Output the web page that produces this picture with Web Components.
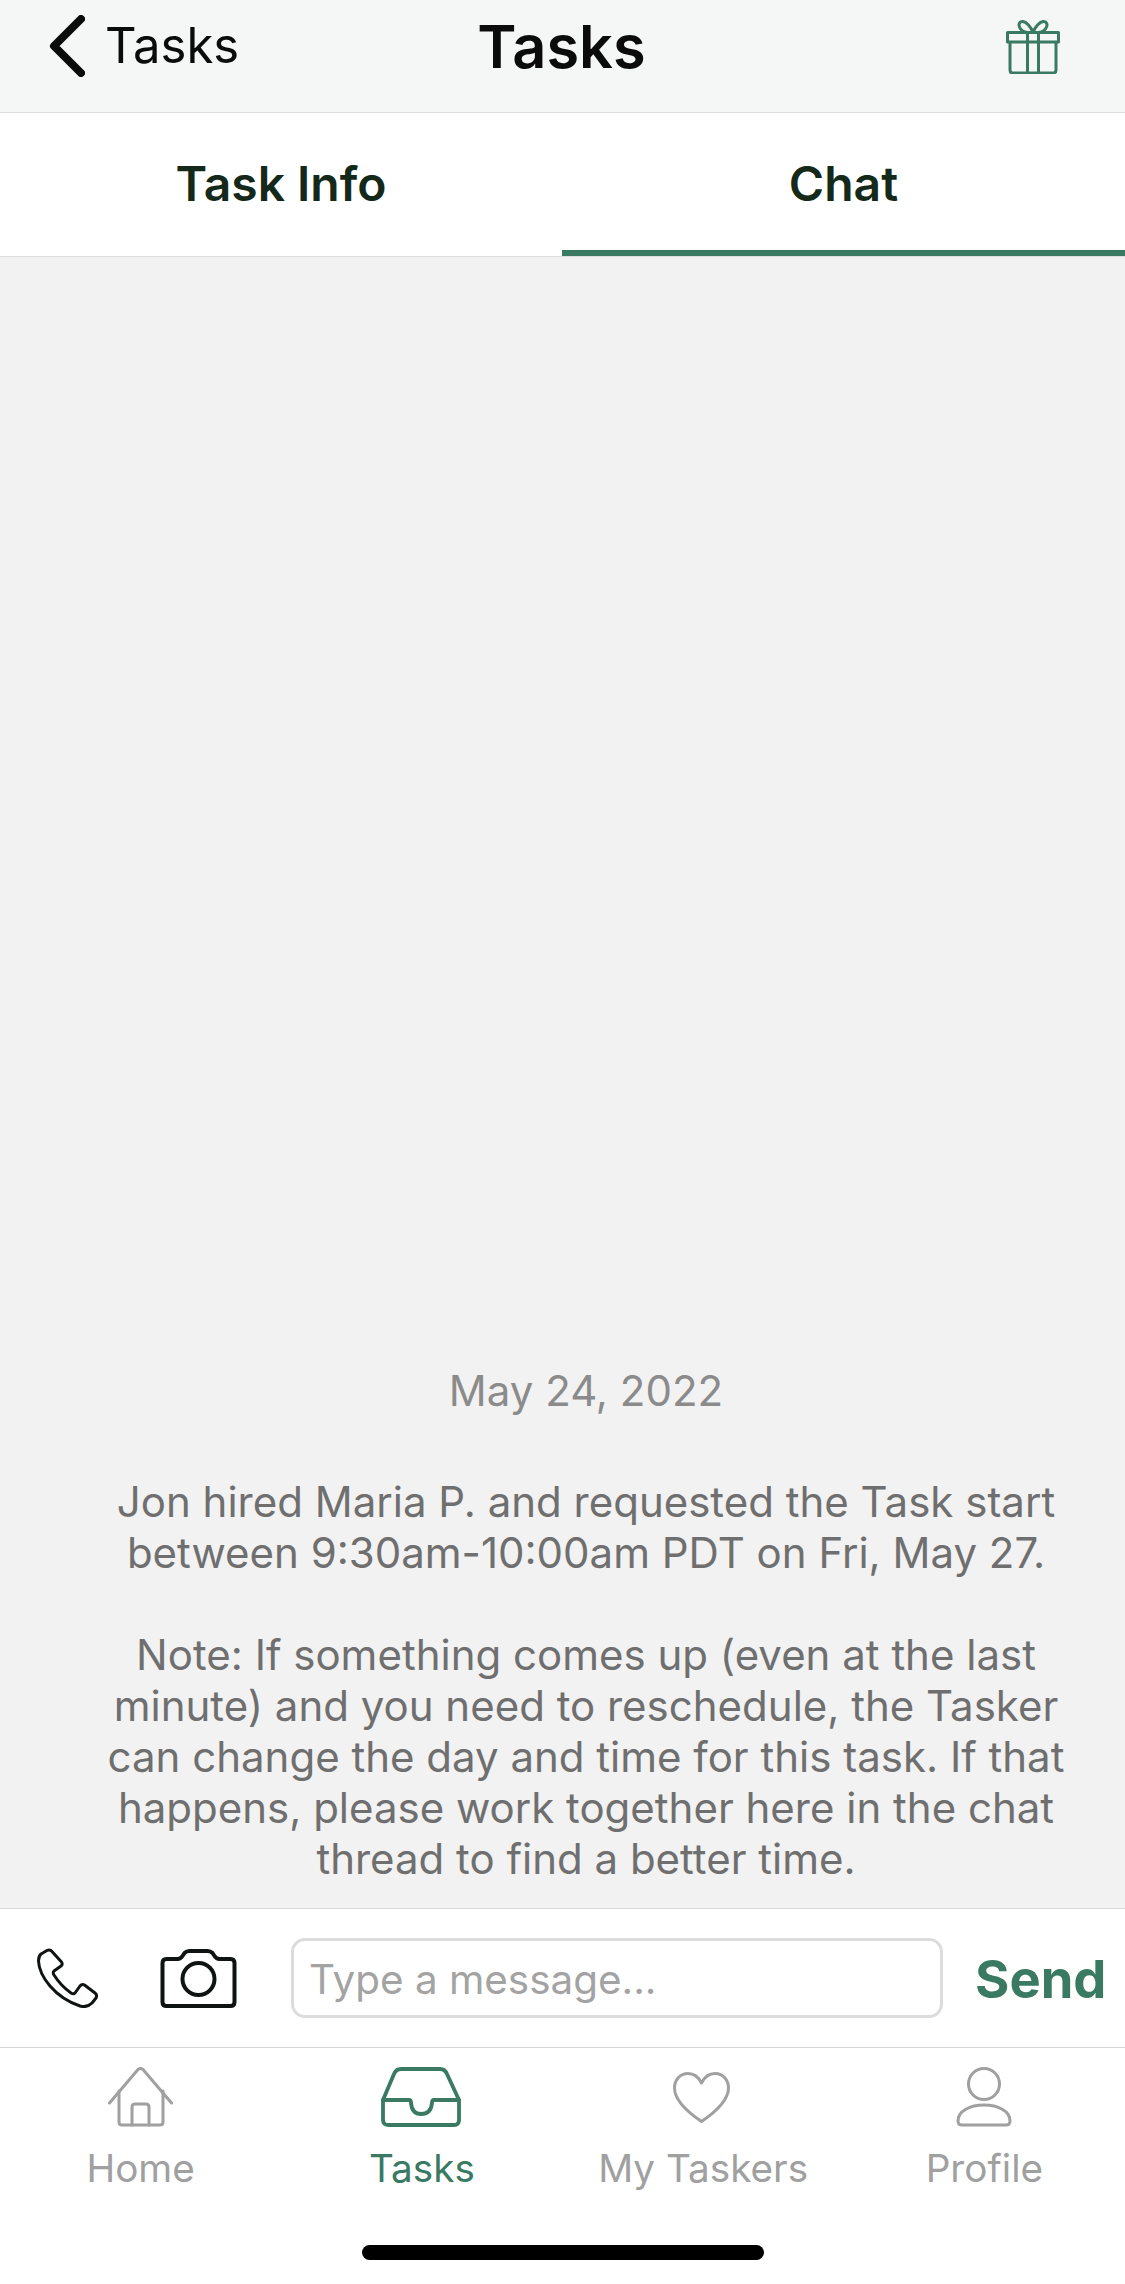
<!DOCTYPE html>
<html lang="en">
<head>
<meta charset="utf-8">
<title>Tasks</title>
<style>
    html, body { margin: 0; height: 100%; }
    body { font-family: Inter, "Liberation Sans", sans-serif; background: #fff; }
    task-screen { height: 2284px; }
</style>
</head>
<body>
<task-screen>
    <task-top-bar back="Tasks" heading="Tasks"></task-top-bar>
    <task-tabs></task-tabs>
    <chat-thread date="May 24, 2022">
        <p>Jon hired Maria P. and requested the Task start<br>between 9:30am-10:00am PDT on Fri, May 27.</p>
        <p>Note: If something comes up (even at the last<br>minute) and you need to reschedule, the Tasker<br>can change the day and time for this task. If that<br>happens, please work together here in the chat<br>thread to find a better time.</p>
    </chat-thread>
    <message-composer></message-composer>
    <bottom-nav>
        <nav-item label="Home" icon="home"></nav-item>
        <nav-item label="Tasks" icon="tasks" active></nav-item>
        <nav-item label="My Taskers" icon="heart"></nav-item>
        <nav-item label="Profile" icon="profile"></nav-item>
    </bottom-nav>
    <home-indicator></home-indicator>
</task-screen>
<script>
const GREEN = '#3a7a63';

const NAV_ICONS = {
    home: /*html*/ `<svg width="65" height="60" viewBox="0 0 65 60" fill="none" stroke="currentColor" stroke-width="3" stroke-linecap="round" stroke-linejoin="round">
        <path d="M1.5 36 L30 2.5 Q32.5 0.5 35 2.5 L63.5 36"/>
        <path d="M11 24 V55 Q11 58 14 58 H52 Q55 58 55 55 V24"/>
        <path d="M24 58 V40 Q24 37 27 37 H38 Q41 37 41 40 V58"/></svg>`,
    tasks: /*html*/ `<svg width="80" height="60" viewBox="0 0 80 60" fill="none" stroke="currentColor" stroke-width="3.8" stroke-linecap="round" stroke-linejoin="round" style="margin-right:2px">
        <path d="M2 33 L13 7 Q15 2 20 2 H59 Q64 2 66 7 L78 33 V53 Q78 58 73 58 H7 Q2 58 2 53 Z"/>
        <path d="M2 33 H28 Q30 33 30 36 Q31 47 40 47 Q50 47 51 36 Q51 33 53 33 H78"/></svg>`,
    heart: /*html*/ `<svg width="57" height="51" viewBox="0 0 57 51" fill="none" stroke="currentColor" stroke-width="3" stroke-linecap="round" stroke-linejoin="round" style="margin-right:4px">
        <path d="M28.5 11 C25 4 20 1.5 15 1.5 C7 1.5 1.5 8 1.5 16 C1.5 29 16 41 28.5 49.5 C41 41 55.5 29 55.5 16 C55.5 8 50 1.5 42 1.5 C37 1.5 32 4 28.5 11 Z"/></svg>`,
    profile: /*html*/ `<svg width="56" height="60" viewBox="0 0 56 60" fill="none" stroke="currentColor" stroke-width="3" stroke-linecap="round" stroke-linejoin="round">
        <circle cx="28" cy="17" r="15.5"/>
        <path d="M2 54 C2 44 14 38 28 38 C42 38 54 44 54 54 Q54 58 50 58 H6 Q2 58 2 54 Z"/></svg>`
};

class TaskScreen extends HTMLElement {
    constructor() {
        super();
        this.attachShadow({ mode: "open" })
            .innerHTML = /*html*/ `
            <style>
                :host {
                    display: flex;
                    flex-direction: column;
                    background: #fff;
                }
            </style>
            <slot></slot>
        `;
    }
}

class TaskTopBar extends HTMLElement {
    constructor() {
        super();
        this.attachShadow({ mode: "open" })
            .innerHTML = /*html*/ `
            <style>
                :host {
                    display: grid;
                    grid-template-columns: 1fr auto 1fr;
                    align-items: start;
                    height: 112px;
                    flex: none;
                    background: #f5f7f6;
                    border-bottom: 1px solid #dcdedd;
                    color: #0b0b0b;
                }
                .back {
                    display: flex;
                    align-items: center;
                    gap: 20px;
                    padding: 15px 0 0 49px;
                    font-size: 49px;
                    line-height: 62px;
                    font-weight: 400;
                }
                h1 {
                    margin: 0 2px 0 0;
                    padding-top: 10px;
                    font-size: 59.5px;
                    line-height: 72px;
                    font-weight: 600;
                }
                .gift {
                    justify-self: end;
                    padding: 20px 65px 0 0;
                    color: ${GREEN};
                }
                svg { display: block; }
            </style>
            <div class="back">
                <svg width="36" height="62" viewBox="0 0 36 62" fill="none" stroke="currentColor" stroke-width="8" stroke-linecap="round" stroke-linejoin="round"><path d="M32 4 L5 31 L32 58"/></svg>
                <span>${this.getAttribute('back')}</span>
            </div>
            <h1>${this.getAttribute('heading')}</h1>
            <div class="gift">
                <svg width="54" height="54" viewBox="0 0 54 54" fill="none" stroke="currentColor" stroke-width="3" stroke-linejoin="round">
                    <rect x="1.5" y="12.5" width="51" height="9.5"/>
                    <path d="M4 22 V50 Q4 53 7 53 H47 Q50 53 50 50 V22"/>
                    <path d="M21.5 12.5 V53 M32.5 12.5 V53"/>
                    <path d="M21.5 12.5 C12 11 11 2 16 1.5 C20 1 25 7 27 12.5 C29 7 34 1 38 1.5 C43 2 42 11 32.5 12.5"/>
                </svg>
            </div>
        `;
    }
}

class TaskTabs extends HTMLElement {
    constructor() {
        super();
        this.attachShadow({ mode: "open" })
            .innerHTML = /*html*/ `
            <style>
                :host {
                    display: grid;
                    grid-template-columns: 562px 563px;
                    height: 143px;
                    flex: none;
                    border-bottom: 1px solid #dcdedd;
                    background: #fff;
                    color: #14291a;
                    font-size: 48px;
                    font-weight: 600;
                    text-align: center;
                }
                div {
                    box-sizing: border-box;
                    line-height: 141px;
                    height: 143px;
                }
                .on { border-bottom: 6px solid ${GREEN}; }
            </style>
            <div>Task Info</div>
            <div class="on">Chat</div>
        `;
    }
}

class ChatThread extends HTMLElement {
    constructor() {
        super();
        this.attachShadow({ mode: "open" })
            .innerHTML = /*html*/ `
            <style>
                :host {
                    display: flex;
                    flex-direction: column;
                    justify-content: flex-end;
                    flex: 1;
                    padding: 0 48px 24px 95px;
                    background: #f2f2f2;
                    text-align: center;
                    font-size: 42px;
                    line-height: 51px;
                    color: #6f6f6f;
                }
                .date { color: #8b8b8b; margin-bottom: 60px; }
                ::slotted(p) { margin: 0 0 51px; white-space: nowrap; }
                ::slotted(p:last-child) { margin-bottom: 0; }
            </style>
            <div class="date">${this.getAttribute('date')}</div>
            <slot></slot>
        `;
    }
}

class MessageComposer extends HTMLElement {
    constructor() {
        super();
        this.attachShadow({ mode: "open" })
            .innerHTML = /*html*/ `
            <style>
                :host {
                    display: flex;
                    align-items: center;
                    box-sizing: border-box;
                    height: 140px;
                    flex: none;
                    padding-left: 37px;
                    background: #fff;
                    border-top: 1px solid #d6d6d6;
                    border-bottom: 1px solid #d6d6d6;
                    color: #0f1311;
                }
                svg { display: block; flex: none; }
                .camera { margin-left: 62px; }
                .field {
                    box-sizing: border-box;
                    width: 652px;
                    height: 80px;
                    margin-left: 54px;
                    padding-left: 15px;
                    border: 3px solid #dcdcdc;
                    border-radius: 14px;
                    font-size: 40.4px;
                    line-height: 78px;
                    color: #a3a3a3;
                }
                .send {
                    margin-left: 32px;
                    padding-top: 2px;
                    font-size: 52.5px;
                    font-weight: 700;
                    color: ${GREEN};
                }
            </style>
            <svg width="61" height="60" viewBox="0 0 61 60" fill="none" stroke="currentColor" stroke-width="3" stroke-linejoin="round">
                <path d="M4 6 L10 2.5 Q13 1 15 3.5 L24.5 14 Q26 16.5 24 18 L17 23 Q15.5 24.5 17 27 Q24 38 34 45 Q36.5 46.5 38 45 L43 38 Q45 35.5 47.5 37 L58 45 Q60.5 47 59 50 L55 55 Q50 60 43 58 Q25 52 13 38 Q2 25 1.5 13 Q1.5 8 4 6 Z"/>
            </svg>
            <svg class="camera" width="77" height="59" viewBox="0 0 76 59" fill="none" stroke="currentColor" stroke-width="4" stroke-linejoin="round">
                <path d="M6 10 H17 Q20 10 22 7 L24 4 Q26 2 29 2 H47 Q50 2 52 4 L54 7 Q56 10 59 10 H70 Q74 10 74 14 V53 Q74 57 70 57 H6 Q2 57 2 53 V14 Q2 10 6 10 Z"/>
                <circle cx="38" cy="30" r="16"/>
            </svg>
            <div class="field">Type a message...</div>
            <div class="send">Send</div>
        `;
    }
}

class BottomNav extends HTMLElement {
    constructor() {
        super();
        this.attachShadow({ mode: "open" })
            .innerHTML = /*html*/ `
            <style>
                :host {
                    display: grid;
                    grid-template-columns: repeat(4, 1fr);
                    box-sizing: border-box;
                    height: 150px;
                    flex: none;
                    padding-top: 19px;
                    background: #fff;
                }
            </style>
            <slot></slot>
        `;
    }
}

class NavItem extends HTMLElement {
    constructor() {
        super();
        const icon = this.getAttribute('icon');
        this.attachShadow({ mode: "open" })
            .innerHTML = /*html*/ `
            <style>
                :host {
                    display: flex;
                    flex-direction: column;
                    align-items: center;
                    color: #a0a0a0;
                    font-size: 38.7px;
                    line-height: 48px;
                }
                :host([active]) { color: ${GREEN}; }
                .icon {
                    display: flex;
                    align-items: center;
                    height: 60px;
                    margin-bottom: 17px;
                }
                svg { display: block; }
            </style>
            <div class="icon">${NAV_ICONS[icon]}</div>
            <span>${this.getAttribute('label')}</span>
        `;
    }
}

class HomeIndicator extends HTMLElement {
    constructor() {
        super();
        this.attachShadow({ mode: "open" })
            .innerHTML = /*html*/ `
            <style>
                :host {
                    display: flex;
                    justify-content: center;
                    height: 86px;
                    flex: none;
                    background: #fff;
                }
                div {
                    width: 402px;
                    height: 15px;
                    margin-top: 47px;
                    border-radius: 8px;
                    background: #000;
                }
            </style>
            <div></div>
        `;
    }
}

customElements.define('task-screen', TaskScreen);
customElements.define('task-top-bar', TaskTopBar);
customElements.define('task-tabs', TaskTabs);
customElements.define('chat-thread', ChatThread);
customElements.define('message-composer', MessageComposer);
customElements.define('bottom-nav', BottomNav);
customElements.define('nav-item', NavItem);
customElements.define('home-indicator', HomeIndicator);
</script>
</body>
</html>
